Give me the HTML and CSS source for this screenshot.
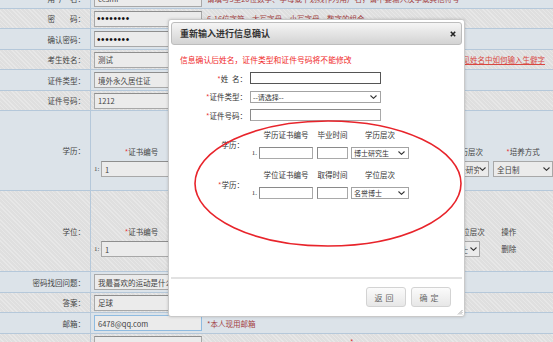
FILE: index.html
```html
<!DOCTYPE html>
<html lang="zh-CN">
<head>
<meta charset="UTF-8">
<meta name="viewport" content="width=device-width, initial-scale=1.0">
<title>考生注册</title>
<link rel="stylesheet" href="styles.css">
</head>
<body>

<div class="page">
  <div class="row blue">
    <div class="lbl">用&ensp;户&ensp;名：</div>
    <div class="val"><input class="inp" value="cesmi" readonly><span class="tip">请填写3至20位数字、字母或下划线作为用户名，请不要输入汉字或其他符号</span></div>
  </div>
  <div class="row gray">
    <div class="lbl">密&emsp;&emsp;码：</div>
    <div class="val"><input class="inp pw" type="password" value="12345678" readonly><span class="tip">6-16位字符，大写字母，小写字母，数字的组合</span></div>
  </div>
  <div class="row blue h21">
    <div class="lbl">确认密码：</div>
    <div class="val"><input class="inp pw" type="password" value="12345678" readonly></div>
  </div>
  <div class="row gray">
    <div class="lbl">考生姓名：</div>
    <div class="val"><input class="inp" value="测试" readonly><a class="help" href="#">参见姓名中如何输入生僻字</a></div>
  </div>
  <div class="row blue h21">
    <div class="lbl">证件类型：</div>
    <div class="val"><input class="inp" value="境外永久居住证" readonly></div>
  </div>
  <div class="row gray">
    <div class="lbl">证件号码：</div>
    <div class="val"><input class="inp" value="1212" readonly></div>
  </div>

  <div class="row blue tall">
    <div class="lbl">学历：</div>
    <div class="val edu">
      <div class="ecol c1">
        <div class="eh"><b>*</b>证书编号</div>
        <div class="ei"><span class="no">1:</span><input class="inp long" value="1" readonly></div>
      </div>
      <div class="ecol c2">
        <div class="eh">毕业学校</div>
        <div class="ei"><input class="inp" readonly></div>
      </div>
      <div class="ecol c3">
        <div class="eh">学历层次</div>
        <div class="bsel w42"><span>博士研究生</span><svg class="chev" viewBox="0 0 7 4"><polyline points="0.5,0.5 3.5,3.3 6.5,0.5"/></svg></div>
      </div>
      <div class="ecol c4">
        <div class="eh"><b>*</b>培养方式</div>
        <div class="bsel w60"><span>全日制</span><svg class="chev" viewBox="0 0 7 4"><polyline points="0.5,0.5 3.5,3.3 6.5,0.5"/></svg></div>
      </div>
    </div>
  </div>

  <div class="row gray tall t81">
    <div class="lbl">学位：</div>
    <div class="val edu">
      <div class="ecol c1">
        <div class="eh"><b>*</b>证书编号</div>
        <div class="ei"><span class="no">1:</span><input class="inp long" value="1" readonly></div>
      </div>
      <div class="ecol c2">
        <div class="eh">授予单位</div>
        <div class="ei"><input class="inp" readonly></div>
      </div>
      <div class="ecol c3">
        <div class="eh">学位层次</div>
        <div class="bsel w31"><span>博士</span><svg class="chev" viewBox="0 0 7 4"><polyline points="0.5,0.5 3.5,3.3 6.5,0.5"/></svg></div>
      </div>
      <div class="ecol c4 ops">
        <div class="eh">操作</div>
        <div class="del">删除</div>
      </div>
    </div>
  </div>

  <div class="row blue h21">
    <div class="lbl">密码找回问题：</div>
    <div class="val"><div class="bsel q"><span>我最喜欢的运动是什么？</span></div></div>
  </div>
  <div class="row gray">
    <div class="lbl">答案：</div>
    <div class="val"><input class="inp" value="足球" readonly></div>
  </div>
  <div class="row blue h21">
    <div class="lbl">邮箱：</div>
    <div class="val"><input class="inp mail" value="6478@qq.com" readonly><span class="tip">*本人现用邮箱</span></div>
  </div>
  <div class="row gray last">
    <div class="lbl">手机：</div>
    <div class="val"><input class="inp" readonly><span class="tip far">*</span></div>
  </div>
</div>

<div class="dialog">
  <div class="dlg-head">
    <span>重新输入进行信息确认</span>
    <svg class="close" viewBox="0 0 6 6"><path d="M0.8 0.8 L5.2 5.2 M5.2 0.8 L0.8 5.2"/></svg>
  </div>
  <div class="dlg-body">
    <p class="warn">信息确认后姓名，证件类型和证件号码将不能修改</p>
    <div class="fields">
      <label><b>*</b>姓&ensp;名：</label><input class="fi focus">
      <label><b>*</b>证件类型：</label>
      <div class="msel fw"><span>--请选择--</span><svg class="chev" viewBox="0 0 7 4"><polyline points="0.5,0.5 3.5,3.3 6.5,0.5"/></svg></div>
      <label><b>*</b>证件号码：</label><input class="fi">
    </div>

    <div class="grp">
      <div class="glbl">学历：</div>
      <div class="gh g1">学历证书编号</div>
      <div class="gh g2">毕业时间</div>
      <div class="gh g3">学历层次</div>
      <div class="num">1.</div>
      <input class="fi i1">
      <input class="fi i2">
      <div class="msel s3"><span>博士研究生</span><svg class="chev" viewBox="0 0 7 4"><polyline points="0.5,0.5 3.5,3.3 6.5,0.5"/></svg></div>
    </div>

    <div class="grp second">
      <div class="glbl"><b>*</b>学历：</div>
      <div class="gh g1">学位证书编号</div>
      <div class="gh g2">取得时间</div>
      <div class="gh g3">学位层次</div>
      <div class="num">1.</div>
      <input class="fi i1">
      <input class="fi i2">
      <div class="msel s3"><span>名誉博士</span><svg class="chev" viewBox="0 0 7 4"><polyline points="0.5,0.5 3.5,3.3 6.5,0.5"/></svg></div>
    </div>
  </div>
  <div class="dlg-foot">
    <button class="btn">返回</button>
    <button class="btn">确定</button>
  </div>
  <svg class="grip" viewBox="0 0 6 6"><path d="M5.5 1 L1 5.5 M5.5 3 L3 5.5 M5.5 5 L5 5.5"/></svg>
</div>

<svg class="mark" viewBox="0 0 553 342"><ellipse cx="328" cy="183.5" rx="133" ry="62.5"/></svg>

</body>
</html>
```

FILE: styles.css
```css
* { box-sizing: border-box; }
body { margin: 0; font-family: "Noto Sans CJK SC", "Liberation Sans", sans-serif; font-size: 7.5px; color: #444; background: #dde4ea; overflow: hidden; }

/* background form */
.page { margin-top: -11px; }
.row { display: grid; grid-template-columns: 91px 1fr; height: 20px; border-bottom: 1px solid #b5c8da; }
.row.h21 { height: 21px; }
.row.tall { height: 80px; }
.row.t81 { height: 81px; }
.row.last { height: 40px; }
.row.last .val { align-items: flex-start; padding-top: 2px; }
.row.blue { background: #dce3e9; }
.row.gray { background: repeating-linear-gradient(45deg, #e7e7e7 0 1px, #dfdfdf 1px 3px); }
.lbl { display: flex; align-items: center; justify-content: flex-end; padding-right: 5px; border-right: 1px solid #b5c8da; white-space: nowrap; }
.val { display: flex; align-items: center; gap: 5px; padding-left: 3px; white-space: nowrap; overflow: hidden; }
.inp { width: 108px; height: 16px; padding: 0 3px; border: 1px solid #a8a8a8; border-top-color: #8e8e8e; background: #ebebeb; font: inherit; font-size: 7.5px; color: #444; outline: none; }
.inp.pw { font-family: "Liberation Sans", sans-serif; font-size: 10px; letter-spacing: 0.6px; color: #111; padding-left: 2px; }
.inp.mail { border-color: #8fbbe0; }
.tip { color: #a3403f; }
.tip.far { margin-left: 143px; color: #e03030; }
.help { margin-left: auto; margin-right: 8px; color: #d9473f; text-decoration: underline; }

.edu { align-items: flex-start; padding-top: 35px; gap: 4px; }
.ecol { display: flex; flex-direction: column; gap: 3px; }
.eh { height: 12px; line-height: 12px; text-align: center; }
.eh b, .fields b, .glbl b { color: #e8373a; font-weight: normal; }
.ei { display: flex; align-items: center; }
.no { width: 7px; font-family: "Liberation Serif", serif; font-size: 7px; }
.inp.long { width: 88px; }
.c1 { width: 95px; }
.c2 { width: 258px; }
.c3 { width: 42px; }
.c4 { width: 60px; }
.ops { padding-left: 7px; }
.ops .eh { text-align: left; }
.del { height: 16px; line-height: 16px; }

.bsel { display: flex; align-items: center; justify-content: space-between; height: 16px; padding: 0 2px 0 3px; border: 1px solid #a8a8a8; background: #ebebeb; overflow: hidden; }
.bsel span { overflow: hidden; }
.bsel.w42 { width: 42px; }
.bsel.w60 { width: 60px; }
.bsel.w31 { width: 31px; }
.bsel.q { width: 108px; }
.chev { flex: none; width: 7px; height: 4px; fill: none; stroke: #333; stroke-width: 1.1; }

/* dialog */
.dialog { position: absolute; left: 168px; top: 19px; width: 297px; height: 298px; padding: 2px; background: #fff; border: 1px solid #c9c9c9; border-radius: 3px; box-shadow: 0 0 3px rgba(0, 0, 0, 0.18); display: flex; flex-direction: column; }
.dlg-head { flex: none; height: 23px; display: flex; align-items: center; justify-content: space-between; padding: 0 5px 0 8px; background: linear-gradient(#f5f5f5, #d3d3d3); border: 1px solid #bdbdbd; border-radius: 3px; font-size: 9px; font-weight: bold; color: #333; }
.close { width: 6px; height: 6px; stroke: #222; stroke-width: 1.6; }
.dlg-body { flex: 1; }
.warn { margin: 9px 0 0 9px; height: 12px; line-height: 12px; font-size: 7.8px; color: #f02a2a; }

.fields { display: grid; grid-template-columns: 77px 131px; column-gap: 2px; row-gap: 6.5px; margin-top: 6px; align-items: center; }
.fields label { text-align: right; padding-right: 1px; color: #333; }
.fi { height: 12px; padding: 0 2px; border: 1px solid #a9a9a9; border-top-color: #8a8a8a; border-left-color: #8a8a8a; background: #fff; font: inherit; outline: none; }
.fields .fi { width: 131px; }
.fi.focus { border-color: #555; }
.msel { display: flex; align-items: center; justify-content: space-between; height: 12px; padding: 0 3px 0 2px; border: 1px solid #a3a3a3; background: #fff; font-size: 7px; color: #333; }
.fw { width: 131px; }

.grp { display: grid; grid-template-columns: 78px 10px 58px 34px 58px; grid-template-rows: 12px 12px; row-gap: 6px; margin-top: 8px; color: #333; }
.grp.second { margin-top: 10px; }
.glbl { grid-row: 1 / 3; grid-column: 1; align-self: center; text-align: right; padding-right: 5px; }
.gh { grid-row: 1; line-height: 12px; text-align: center; }
.g1 { grid-column: 3; width: 54px; }
.g2 { grid-column: 4; width: 31px; }
.g3 { grid-column: 5; }
.num { grid-row: 2; grid-column: 2; text-align: right; padding-right: 2px; line-height: 12px; font-family: "Liberation Serif", serif; font-size: 7px; }
.i1 { grid-row: 2; grid-column: 3; width: 54px; }
.i2 { grid-row: 2; grid-column: 4; width: 31px; }
.s3 { grid-row: 2; grid-column: 5; width: 58px; }

.dlg-foot { flex: none; height: 37px; display: flex; justify-content: flex-end; align-items: flex-start; gap: 5px; padding: 8px 11px 0 0; border-top: 2px solid #e2e2e2; }
.btn { width: 40px; height: 20px; border: 1px solid #d3d3d3; border-radius: 3px; background: linear-gradient(#fbfbfb, #e7e7e7); font-family: inherit; font-size: 8px; letter-spacing: 3px; padding-left: 5px; color: #666; }
.grip { position: absolute; right: 1px; bottom: 1px; width: 6px; height: 6px; stroke: #888; stroke-width: 0.7; }

/* red annotation */
.mark { position: absolute; left: 0; top: 0; width: 553px; height: 342px; pointer-events: none; }
.mark ellipse { fill: none; stroke: #e8242b; stroke-width: 1.6; }
```
